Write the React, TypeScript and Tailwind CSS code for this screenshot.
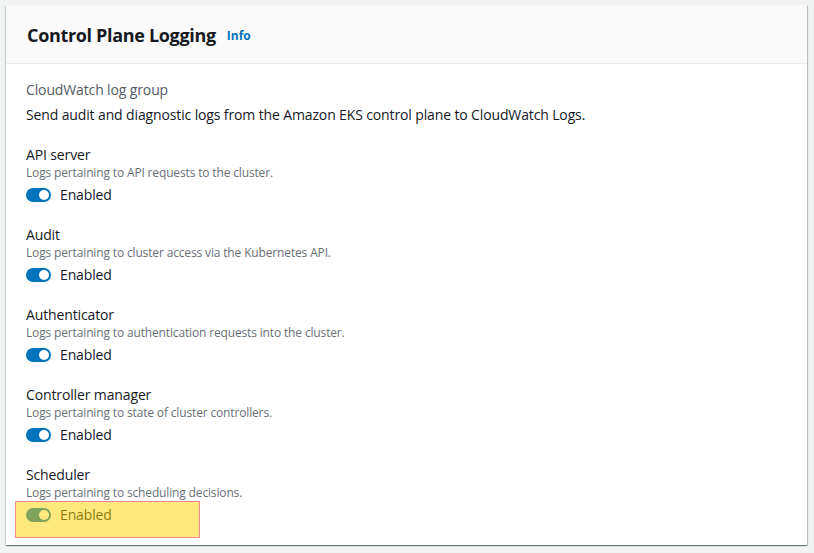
import React from "react";

const font = { fontFamily: '"Open Sans", "Liberation Sans", Arial, sans-serif' };

const items = [
  { label: "API server", desc: "Logs pertaining to API requests to the cluster." },
  { label: "Audit", desc: "Logs pertaining to cluster access via the Kubernetes API." },
  { label: "Authenticator", desc: "Logs pertaining to authentication requests into the cluster." },
  { label: "Controller manager", desc: "Logs pertaining to state of cluster controllers." },
  { label: "Scheduler", desc: "Logs pertaining to scheduling decisions." },
];

function Toggle() {
  return (
    <span className="relative inline-block h-[14px] w-[25px] rounded-full bg-[#0073bb]">
      <span className="absolute right-[2px] top-[2px] h-[10px] w-[10px] rounded-full bg-white" />
    </span>
  );
}

export default function App() {
  return (
    <div className="min-h-[553px] w-[814px] bg-[#f2f3f3] pb-[7px] pl-[6px] pr-[7px] pt-[5px]" style={font}>
      <div className="bg-white shadow-[0_1px_1px_0_rgba(0,28,36,0.35),1px_1px_1px_0_rgba(0,28,36,0.2),-1px_1px_1px_0_rgba(0,28,36,0.12)]">
        <div className="flex h-[59px] items-center gap-[11px] border-b border-[#eaeded] bg-[#fafafa] pl-[21px] pt-[1px]">
          <span className="text-[18px] font-bold leading-[22px] tracking-[-0.33px] text-[#16191f]">Control Plane Logging</span>
          <span className="mt-[2px] text-[12px] font-bold text-[#0073bb]">Info</span>
        </div>
        <div className="flex flex-col px-[20px] pb-[20px] pt-[16px] text-[#16191f] tracking-[-0.13px]">
          <div className="text-[14px] leading-5 text-[#545b64]">CloudWatch log group</div>
          <div className="mt-[5px] text-[14px] leading-5">
            Send audit and diagnostic logs from the Amazon EKS control plane to CloudWatch Logs.
          </div>
          <div className="mt-5 flex flex-col gap-5">
            {items.map((it, i) => (
              <div key={it.label} className="flex flex-col">
                <div className="text-[14px] leading-5">{it.label}</div>
                <div className="text-[12px] leading-4 tracking-[-0.15px] text-[#687078]">{it.desc}</div>
                <div className="relative mt-[3px] flex h-[21px] items-center gap-[9px]">
                  <Toggle />
                  <span className="text-[14px] leading-5">Enabled</span>
                  {i === items.length - 1 && (
                    <div className="pointer-events-none absolute left-[-11px] top-[-3px] h-[37px] w-[185px] border border-[#f4898b] bg-[rgba(255,212,0,0.5)]" />
                  )}
                </div>
              </div>
            ))}
          </div>
        </div>
      </div>
    </div>
  );
}
